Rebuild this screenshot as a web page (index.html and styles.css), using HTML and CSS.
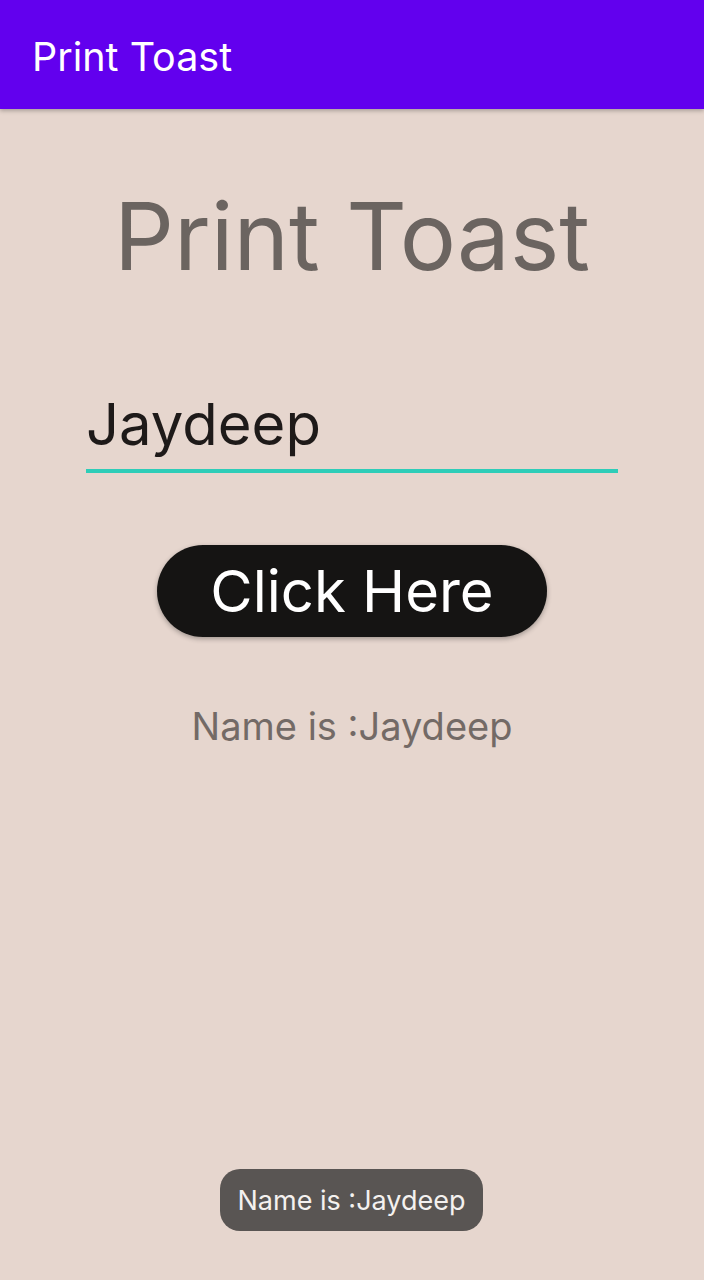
FILE: index.html
```html
<!DOCTYPE html>
<html>
<head>
<meta charset="utf-8">
<link rel="stylesheet" href="styles.css">
</head>
<body>
<div class="screen">
  <header class="appbar"><span class="appbar-title">Print Toast</span></header>
  <main class="content">
    <h1 class="title">Print Toast</h1>
    <div class="field"><span class="field-text">Jaydeep</span></div>
    <button class="btn">Click Here</button>
    <p class="result">Name is :Jaydeep</p>
  </main>
  <div class="toast">Name is :Jaydeep</div>
</div>
</body>
</html>
```
FILE: styles.css
```css
html, body {
  margin: 0;
  padding: 0;
}
body {
  font-family: Inter, "Noto Sans", sans-serif;
  background: #e6d6ce;
}
.screen {
  position: relative;
  width: 704px;
  height: 1280px;
  overflow: hidden;
  background: #e6d6ce;
}
.appbar {
  height: 109px;
  background: #6200ee;
  display: flex;
  align-items: center;
  padding-left: 32px;
  box-shadow: 0 2px 4px rgba(0,0,0,0.25);
  position: relative;
  z-index: 1;
}
.appbar-title {
  color: #fff;
  font-size: 39.5px;
  font-weight: 400;
  margin-top: 4px;
}
.content {
  display: flex;
  flex-direction: column;
  align-items: center;
}
.title {
  margin: 0;
  margin-top: 80px;
  font-size: 94px;
  font-weight: 400;
  color: #6b6460;
  line-height: 1;
  letter-spacing: 0;
}
.field {
  margin-top: 112px;
  width: 532px;
  border-bottom: 4px solid #2ecdb8;
  padding-bottom: 16px;
}
.field-text {
  font-size: 58px;
  color: #1e1a19;
  line-height: 1;
}
.btn {
  margin-top: 72px;
  width: 390px;
  height: 92px;
  border: none;
  border-radius: 46px;
  background: #151413;
  color: #fff;
  font-family: Inter, "Noto Sans", sans-serif;
  font-size: 58px;
  box-shadow: 0 2px 5px rgba(0,0,0,0.3);
  padding: 0;
}
.result {
  margin: 0;
  margin-top: 66px;
  font-size: 38px;
  color: #736a66;
}
.toast {
  position: absolute;
  left: 220px;
  top: 1169px;
  width: 263px;
  height: 62px;
  border-radius: 20px;
  background: #595553;
  color: #f4f1ef;
  font-size: 27px;
  display: flex;
  align-items: center;
  justify-content: center;
}
```
